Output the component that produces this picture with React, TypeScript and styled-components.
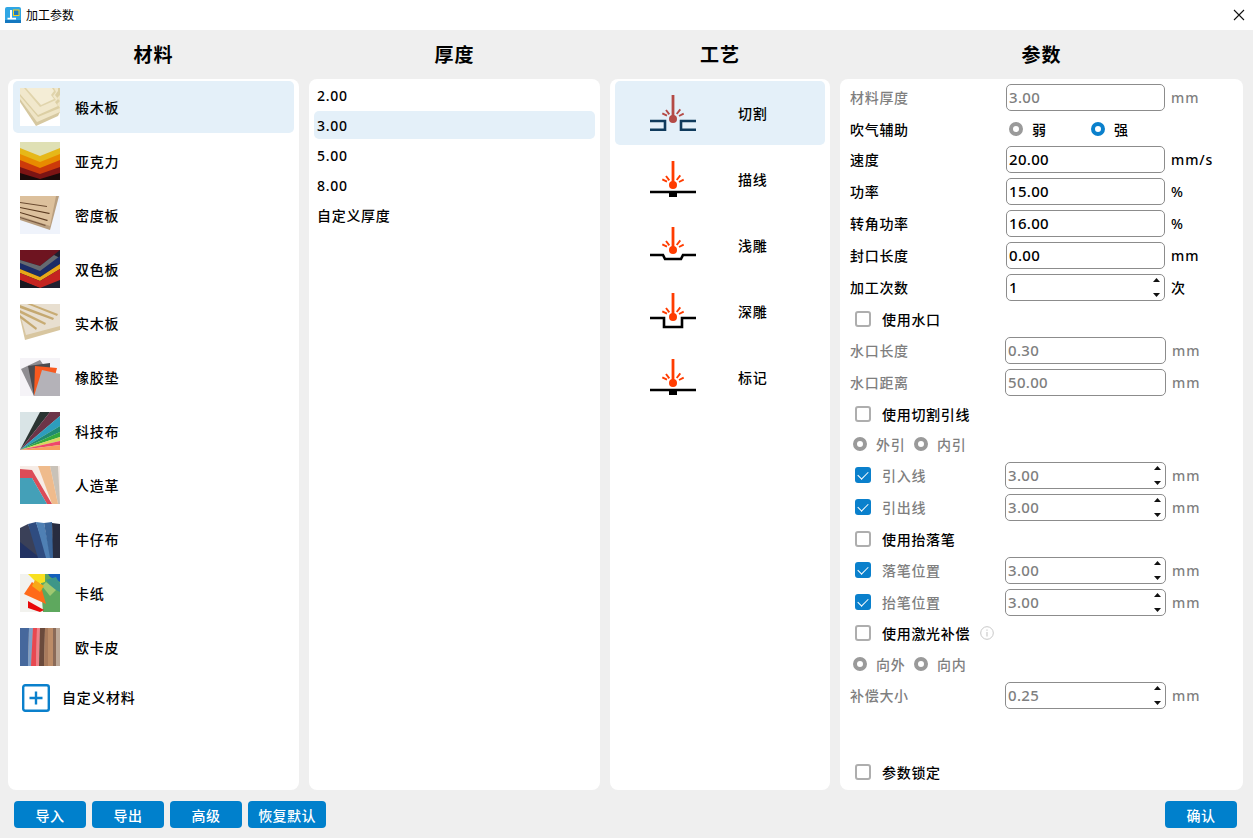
import React from "react";
import styled, { createGlobalStyle } from "styled-components";

const FONT = `"Noto Sans", "Noto Sans CJK SC", sans-serif`;

const GlobalStyle = createGlobalStyle`
  html, body {
    margin: 0;
    padding: 0;
    background: #efefef;
    font-family: ${FONT};
    overflow: hidden;
  }
  * { box-sizing: border-box; }
`;

type Shape = [string, string];

const thumbs: Record<string, { bg: string; shapes: Shape[] }> = {
  basswood: {
    bg: "#ffffff",
    shapes: [
      ["0,14 16,38 38,28 40,24 40,0 0,0", "#d6c8a0"],
      ["0,11 17,34 40,24 40,0 0,0", "#efe5c6"],
      ["0,8 18,29 40,20 37,16 40,13 37,10 40,7 40,0 0,0", "#dccfa4"],
      ["0,6 18,27 38,18 35,14 38,11 35,7 38,3 38,0 0,0", "#f1e8cc"],
      ["4,0 20,19 36,12 33,8 36,4 34,0", "#e0d4ac"],
      ["6,0 21,17 34,11 31,7 34,3 32,0", "#f4edd6"],
    ],
  },
  acrylic: {
    bg: "#d8d8c0",
    shapes: [
      ["0,0 40,0 40,6 20,14 0,6", "#dfe0b4"],
      ["0,6 20,14 40,6 40,14 20,22 0,14", "#e6b818"],
      ["0,12 20,20 40,12 40,20 20,28 0,20", "#e88a00"],
      ["0,18 20,26 40,18 40,26 20,33 0,26", "#cc3a0a"],
      ["0,25 20,32 40,25 40,32 20,38 0,32", "#7c1414"],
      ["0,31 20,37 40,31 40,38 0,38", "#1a0a0a"],
    ],
  },
  mdf: {
    bg: "#eff3fb",
    shapes: [
      ["0,0 39,0 30,34 0,24", "#b99f80"],
      ["0,0 36,0 30,30 0,20", "#dcc09c"],
      ["0,6 27,10 27,11 0,7", "#6a4a30"],
      ["0,11 30,17 29,18 0,12", "#5a3a20"],
      ["0,16 28,24 27,25 0,17", "#5a3a20"],
      ["0,21 26,29 25,30 0,22", "#7a5a40"],
    ],
  },
  twoColor: {
    bg: "#202030",
    shapes: [
      ["0,0 40,0 20,16 0,10", "#6e1420"],
      ["0,10 20,16 34,5 40,8 20,22 0,14", "#666a70"],
      ["0,13 20,21 40,6 40,14 20,27 0,19", "#1c2c66"],
      ["0,19 20,27 40,14 40,19 20,31 0,23", "#e8a818"],
      ["0,23 20,31 40,19 40,30 20,38 0,30", "#c42420"],
      ["0,30 20,38 0,38", "#181820"],
    ],
  },
  solidWood: {
    bg: "#ffffff",
    shapes: [
      ["0,14 5,36 40,26 40,0 0,0", "#d8c6a0"],
      ["0,10 6,31 40,22 40,0 0,0", "#e8dfd0"],
      ["0,1 34,14 33,16 0,4", "#c4a870"],
      ["0,6 26,19 25,21 0,9", "#c8ac74"],
      ["0,11 17,24 16,26 0,14", "#c4a870"],
      ["12,0 38,10 37,12 7,0", "#c8ac74"],
    ],
  },
  rubber: {
    bg: "#f5f3f7",
    shapes: [
      ["1,11 20,2 30,16 14,38", "#8f8d92"],
      ["8,8 30,5 30,20 14,38", "#4d4b4e"],
      ["15,8 37,10 30,38 14,38", "#f8591f"],
      ["22,12 40,16 40,38 14,38", "#b4b2b8"],
    ],
  },
  fabric: {
    bg: "#d9e4e6",
    shapes: [
      ["0,38 20,0 30,0", "#2a3432"],
      ["0,38 30,0 40,0 40,4", "#6c3448"],
      ["0,38 40,4 40,14", "#2d9dbd"],
      ["0,38 40,14 40,20", "#1f8a70"],
      ["0,38 40,20 40,25", "#34a83c"],
      ["0,38 40,25 40,29", "#d8d85c"],
      ["0,38 40,29 40,33", "#f0486a"],
      ["0,38 40,33 40,38", "#f8a060"],
    ],
  },
  leather: {
    bg: "#f6ece6",
    shapes: [
      ["30,0 38,0 40,38 38,38", "#c9c2b8"],
      ["18,0 30,0 38,38 32,38", "#efbb8c"],
      ["0,3 12,4 32,38 27,38 12,12 0,12", "#dc4c58"],
      ["0,12 12,12 27,38 0,38", "#44a0b8"],
    ],
  },
  denim: {
    bg: "#ffffff",
    shapes: [
      ["0,8 8,4 22,38 0,38", "#3a4058"],
      ["0,22 20,38 0,38", "#223262"],
      ["8,4 16,2 28,38 18,38", "#2f4c80"],
      ["16,2 24,3 31,38 26,38", "#4f80b4"],
      ["24,3 32,2 34,38 30,38", "#3a6498"],
      ["32,3 40,4 40,38 33,38", "#282c40"],
    ],
  },
  card: {
    bg: "#f2f2ee",
    shapes: [
      ["20,0 40,0 40,38 23,38", "#5ea85e"],
      ["28,0 40,0 40,8 30,3", "#1460bc"],
      ["26,6 36,3 40,10 40,18 32,14", "#3e9688"],
      ["22,12 26,8 36,16 30,22", "#a0c870"],
      ["8,0 25,0 25,8 18,10", "#f8e020"],
      ["12,8 22,16 26,30 4,20", "#ff6a18"],
      ["15,6 24,12 20,18 12,12", "#f8a818"],
      ["8,27 24,36 20,38 8,34", "#e80808"],
    ],
  },
  okapi: {
    bg: "#bca898",
    shapes: [
      ["0,0 9,0 8,38 0,38", "#46689c"],
      ["9,0 13,0 11,38 8,38", "#7ea0c8"],
      ["13,0 17,0 16,38 11,38", "#e84850"],
      ["17,0 20,0 19,38 16,38", "#f08088"],
      ["20,0 25,0 24,38 19,38", "#6a4a3c"],
      ["25,0 28,0 28,38 24,38", "#a87a5c"],
      ["28,0 33,0 33,38 28,38", "#bc8c68"],
      ["33,0 36,0 36,38 33,38", "#8a6a58"],
    ],
  },
};

const materials = [
  { name: "椴木板", thumb: "basswood" },
  { name: "亚克力", thumb: "acrylic" },
  { name: "密度板", thumb: "mdf" },
  { name: "双色板", thumb: "twoColor" },
  { name: "实木板", thumb: "solidWood" },
  { name: "橡胶垫", thumb: "rubber" },
  { name: "科技布", thumb: "fabric" },
  { name: "人造革", thumb: "leather" },
  { name: "牛仔布", thumb: "denim" },
  { name: "卡纸", thumb: "card" },
  { name: "欧卡皮", thumb: "okapi" },
];

const thicknesses = ["2.00", "3.00", "5.00", "8.00", "自定义厚度"];

type BaseKind = "cut" | "line" | "shallow" | "deep" | "mark";

const processes: { name: string; base: BaseKind }[] = [
  { name: "切割", base: "cut" },
  { name: "描线", base: "line" },
  { name: "浅雕", base: "shallow" },
  { name: "深雕", base: "deep" },
  { name: "标记", base: "mark" },
];

const Thumb = ({ kind }: { kind: string }) => {
  const t = thumbs[kind];
  return (
    <ThumbSvg viewBox="0 0 40 38">
      <rect width="40" height="38" fill={t.bg} />
      {t.shapes.map(([points, fill], i) => (
        <polygon key={i} points={points} fill={fill} />
      ))}
    </ThumbSvg>
  );
};

const LaserIcon = ({ base }: { base: BaseKind }) => {
  const selected = base === "cut";
  const laser = selected ? "#b44a46" : "#ff3c00";
  const ground = selected ? "#0f3a5c" : "#000000";
  const dotY = base === "shallow" ? 23 : 24;
  return (
    <LaserSvg viewBox="0 0 46 36">
      <g stroke={laser} fill="none">
        <path d="M23 0V22" strokeWidth="2.8" />
        <path d={`M16 ${dotY - 9}L19.3 ${dotY - 4.7}M30.3 ${dotY - 9.7}L26.7 ${dotY - 5}M12.3 ${dotY - 5.7}L17 ${dotY - 3.3}M33.7 ${dotY - 5.3}L29 ${dotY - 3}`} strokeWidth="1.9" />
      </g>
      <circle cx="23" cy={dotY} r="4" fill={laser} />
      <g stroke={ground} strokeWidth="2.6" fill="none">
        {base === "cut" && <path d="M0 26H15V34.7H0M46 26H31V34.7H46" />}
        {(base === "line" || base === "mark") && <path d="M0 31H46" />}
        {base === "shallow" && <path d="M0 28H13L15 32H31L33 28H46" />}
        {base === "deep" && <path d="M0 25H14V34H32V25H46" />}
      </g>
      {(base === "line" || base === "mark") && <rect x="19" y="31" width="8" height="5" fill={ground} />}
    </LaserSvg>
  );
};

const Spin = () => (
  <SpinBox>
    <svg width="7" height="4" viewBox="0 0 7 4"><path d="M3.5 0L7 4H0Z" fill="#111" /></svg>
    <svg width="7" height="4" viewBox="0 0 7 4"><path d="M0 0H7L3.5 4Z" fill="#111" /></svg>
  </SpinBox>
);

type FieldProps = {
  label: string;
  value: string;
  unit: string;
  off?: boolean;
  spin?: boolean;
  wide?: boolean;
  gap?: number;
  checked?: boolean;
};

const Field = ({ label, value, unit, off, spin, wide, gap, checked }: FieldProps) => (
  <Row $gap={gap}>
    {checked ? (
      <CheckLabel>
        <CheckBox $on />
        <SubLabel>{label}</SubLabel>
      </CheckLabel>
    ) : (
      <Label $off={off} $wide={wide}>{label}</Label>
    )}
    <InputBox $off={off} $wide={wide}>
      <span>{value}</span>
      {spin && <Spin />}
    </InputBox>
    <Unit $off={off}>{unit}</Unit>
  </Row>
);

const CheckRow = ({ label, gap, children }: { label: string; gap?: number; children?: React.ReactNode }) => (
  <Row $gap={gap}>
    <CheckLabel>
      <CheckBox />
      <CheckText>{label}</CheckText>
      {children}
    </CheckLabel>
  </Row>
);

const RadioPair = ({ a, b, gap }: { a: string; b: string; gap?: number }) => (
  <Row $gap={gap}>
    <RadioLine>
      <Radio />
      <RadioText>{a}</RadioText>
      <Radio />
      <RadioText>{b}</RadioText>
    </RadioLine>
  </Row>
);

const App = () => {
  return (
    <Window>
      <GlobalStyle />
      <TitleBar>
        <LogoSvg viewBox="0 0 16 16">
          <rect width="16" height="16" rx="2" fill="#2fa6e4" />
          <rect y="13" width="16" height="3" fill="#1478c0" />
          <path d="M2.5 12.5H11V10.8H7V3H5V10.8H2.5Z" fill="#fff" />
          <rect x="8.5" y="3" width="5.5" height="5.5" fill="#1c7cc0" stroke="#f4d020" strokeWidth="1" />
        </LogoSvg>
        <WindowTitle>加工参数</WindowTitle>
        <CloseSvg viewBox="0 0 12 12">
          <path d="M1 1L11 11M11 1L1 11" stroke="#111" strokeWidth="1.1" fill="none" />
        </CloseSvg>
      </TitleBar>

      <Columns>
        <Column>
          <Heading>材料</Heading>
          <Panel $pad="2px 5px">
            {materials.map((m, i) => (
              <MaterialRow key={m.name} $active={i === 0}>
                <Thumb kind={m.thumb} />
                <ItemText>{m.name}</ItemText>
              </MaterialRow>
            ))}
            <CustomRow>
              <PlusSvg viewBox="0 0 28 28">
                <rect x="1.2" y="1.2" width="25.6" height="25.6" rx="2" fill="none" stroke="#0a80cc" strokeWidth="2.4" />
                <path d="M14 7.5V20.5M7.5 14H20.5" stroke="#0a80cc" strokeWidth="2.4" />
              </PlusSvg>
              <CustomText>自定义材料</CustomText>
            </CustomRow>
          </Panel>
        </Column>

        <Column>
          <Heading>厚度</Heading>
          <Panel $pad="2px 5px">
            {thicknesses.map((t, i) => (
              <ThicknessRow key={t} $active={i === 1}>{t}</ThicknessRow>
            ))}
          </Panel>
        </Column>

        <Column>
          <Heading>工艺</Heading>
          <Panel $pad="2px 5px">
            {processes.map((p, i) => (
              <ProcessRow key={p.name} $active={i === 0}>
                <LaserIcon base={p.base} />
                <ItemText>{p.name}</ItemText>
              </ProcessRow>
            ))}
          </Panel>
        </Column>

        <Column>
          <Heading>参数</Heading>
          <ParamPanel>
            <Field label="材料厚度" value="3.00" unit="mm" off />
            <Row>
              <Label>吹气辅助</Label>
              <AirGroup>
                <Radio />
                <AirText>弱</AirText>
                <Radio $on />
                <AirText>强</AirText>
              </AirGroup>
            </Row>
            <Field label="速度" value="20.00" unit="mm/s" gap={2} />
            <Field label="功率" value="15.00" unit="%" />
            <Field label="转角功率" value="16.00" unit="%" />
            <Field label="封口长度" value="0.00" unit="mm" />
            <Field label="加工次数" value="1" unit="次" spin />
            <CheckRow label="使用水口" />
            <Field label="水口长度" value="0.30" unit="mm" off wide gap={3} />
            <Field label="水口距离" value="50.00" unit="mm" off wide />
            <CheckRow label="使用切割引线" />
            <RadioPair a="外引" b="内引" gap={2} />
            <Field label="引入线" value="3.00" unit="mm" off wide spin checked gap={3} />
            <Field label="引出线" value="3.00" unit="mm" off wide spin checked />
            <CheckRow label="使用抬落笔" />
            <Field label="落笔位置" value="3.00" unit="mm" off wide spin checked gap={3} />
            <Field label="抬笔位置" value="3.00" unit="mm" off wide spin checked />
            <CheckRow label="使用激光补偿" gap={3}>
              <InfoSvg viewBox="0 0 14 14">
                <circle cx="7" cy="7" r="6.3" fill="none" stroke="#c8c8c8" />
                <path d="M7 6V10.5M7 3.5V4.8" stroke="#c8c8c8" strokeWidth="1.1" />
              </InfoSvg>
            </CheckRow>
            <RadioPair a="向外" b="向内" gap={3} />
            <Field label="补偿大小" value="0.25" unit="mm" off wide spin gap={3} />
            <LockRow>
              <CheckLabel>
                <CheckBox />
                <CheckText>参数锁定</CheckText>
              </CheckLabel>
            </LockRow>
          </ParamPanel>
        </Column>
      </Columns>

      <Footer>
        <FootButton>导入</FootButton>
        <FootButton>导出</FootButton>
        <FootButton>高级</FootButton>
        <FootButton $wide>恢复默认</FootButton>
        <FooterSpacer />
        <FootButton>确认</FootButton>
      </Footer>
    </Window>
  );
};

export default App;

const Window = styled.div`
  width: 1253px;
  height: 838px;
  display: flex;
  flex-direction: column;
  background: #efefef;
  color: #000;
  font-size: 14px;
`;

const TitleBar = styled.div`
  height: 30px;
  background: #fff;
  display: flex;
  align-items: center;
  padding: 0 8px 0 5px;
`;

const LogoSvg = styled.svg`
  width: 16px;
  height: 16px;
  margin-right: 5px;
`;

const WindowTitle = styled.div`
  font-size: 12px;
  flex: 1;
`;

const CloseSvg = styled.svg`
  width: 12px;
  height: 12px;
`;

const Columns = styled.div`
  height: 760px;
  display: grid;
  grid-template-columns: 291px 291px 220px 403px;
  column-gap: 10px;
  padding: 0 10px 0 8px;
`;

const Column = styled.div`
  display: flex;
  flex-direction: column;
  min-height: 0;
`;

const Heading = styled.div`
  height: 49px;
  padding-bottom: 2px;
  display: flex;
  align-items: center;
  justify-content: center;
  font-size: 19px;
  font-weight: 700;
  letter-spacing: 1px;
`;

const Panel = styled.div<{ $pad: string }>`
  height: 711px;
  background: #fff;
  border-radius: 8px;
  padding: ${({ $pad }) => $pad};
  display: flex;
  flex-direction: column;
`;

const ParamPanel = styled(Panel).attrs({ $pad: "0 10px 4px 10px" })``;

const ItemText = styled.span`
  font-size: 14px;
  font-weight: 500;
  letter-spacing: 0.7px;
`;

const CustomText = styled(ItemText)`
  padding-bottom: 3px;
`;

const MaterialRow = styled.div<{ $active?: boolean }>`
  height: 52px;
  margin-bottom: 2px;
  flex: none;
  display: flex;
  align-items: center;
  padding-left: 7px;
  gap: 15px;
  border-radius: 5px;
  background: ${({ $active }) => ($active ? "#e4f0f9" : "transparent")};
`;

const ThumbSvg = styled.svg`
  width: 40px;
  height: 38px;
  flex: none;
`;

const CustomRow = styled.div`
  height: 46px;
  flex: none;
  display: flex;
  align-items: center;
  padding-left: 9px;
  gap: 12px;
`;

const PlusSvg = styled.svg`
  width: 28px;
  height: 28px;
`;

const ThicknessRow = styled.div<{ $active?: boolean }>`
  height: 28px;
  margin-bottom: 2px;
  flex: none;
  display: flex;
  align-items: center;
  padding-left: 3px;
  border-radius: 5px;
  font-size: 14px;
  font-weight: 500;
  letter-spacing: 0.7px;
  background: ${({ $active }) => ($active ? "#e4f0f9" : "transparent")};
`;

const ProcessRow = styled.div<{ $active?: boolean }>`
  height: 64px;
  margin-bottom: 2px;
  flex: none;
  display: flex;
  align-items: center;
  padding-left: 35px;
  gap: 42px;
  border-radius: 5px;
  background: ${({ $active }) => ($active ? "#e4f0f9" : "transparent")};
`;

const LaserSvg = styled.svg`
  width: 46px;
  height: 36px;
  flex: none;
  overflow: visible;
`;

const Row = styled.div<{ $gap?: number }>`
  height: 28px;
  flex: none;
  margin-top: ${({ $gap }) => $gap ?? 4}px;
  display: flex;
  align-items: center;
`;

const Label = styled.div<{ $off?: boolean; $wide?: boolean }>`
  width: ${({ $wide }) => ($wide ? 155 : 156)}px;
  flex: none;
  font-weight: 500;
  letter-spacing: 0.7px;
  color: ${({ $off }) => ($off ? "#7f7f7f" : "#000")};
`;

const InputBox = styled.div<{ $off?: boolean; $wide?: boolean }>`
  width: ${({ $wide }) => ($wide ? 161 : 159)}px;
  height: 27px;
  flex: none;
  border: 1px solid #8c8c8c;
  border-radius: 5px;
  background: #fff;
  display: flex;
  align-items: center;
  justify-content: space-between;
  padding: 0 4px 0 2px;
  font-size: 15px;
  font-weight: 500;
  letter-spacing: 0.3px;
  color: ${({ $off }) => ($off ? "#7f7f7f" : "#000")};
`;

const SpinBox = styled.div`
  height: 19px;
  display: flex;
  flex-direction: column;
  justify-content: space-between;
  align-items: center;
`;

const Unit = styled.div<{ $off?: boolean }>`
  margin-left: 6px;
  font-weight: 500;
  letter-spacing: 0.9px;
  color: ${({ $off }) => ($off ? "#7f7f7f" : "#000")};
`;

const CheckLabel = styled.div`
  width: 155px;
  flex: none;
  display: flex;
  align-items: center;
  padding-left: 5px;
`;

const CheckBox = styled.div<{ $on?: boolean }>`
  width: 16px;
  height: 16px;
  flex: none;
  margin-right: 11px;
  border-radius: 3px;
  border: ${({ $on }) => ($on ? "none" : "2px solid #aeaeae")};
  background: ${({ $on }) => ($on ? "#0a80cc" : "#fff")};
  display: flex;
  align-items: center;
  justify-content: center;

  &::after {
    content: "";
    display: ${({ $on }) => ($on ? "block" : "none")};
    width: 9px;
    height: 5px;
    margin-top: -2px;
    border-left: 1px solid #fff;
    border-bottom: 1px solid #fff;
    transform: rotate(-45deg);
  }
`;

const CheckText = styled.span`
  font-weight: 500;
  letter-spacing: 0.7px;
  white-space: nowrap;
`;

const SubLabel = styled(CheckText)`
  color: #7f7f7f;
`;

const InfoSvg = styled.svg`
  width: 14px;
  height: 14px;
  margin-left: 10px;
  flex: none;
`;

const RadioLine = styled.div`
  display: flex;
  align-items: center;
  padding-left: 3px;
`;

const Radio = styled.div<{ $on?: boolean }>`
  width: 14px;
  height: 14px;
  flex: none;
  border-radius: 50%;
  border: 4px solid ${({ $on }) => ($on ? "#0a80cc" : "#9a9a9a")};
  background: #fff;
`;

const RadioText = styled.span`
  margin: 0 9px;
  width: 29px;
  font-weight: 500;
  letter-spacing: 0.7px;
  color: #7f7f7f;
  white-space: nowrap;
`;

const AirGroup = styled.div`
  display: flex;
  align-items: center;
  padding-left: 3px;
`;

const AirText = styled.span`
  width: 59px;
  margin-left: 9px;
  font-weight: 500;
`;

const LockRow = styled.div`
  margin-top: auto;
  height: 28px;
  flex: none;
  display: flex;
  align-items: center;
`;

const Footer = styled.div`
  height: 48px;
  display: flex;
  align-items: flex-start;
  gap: 6px;
  padding: 11px 16px 0 14px;
`;

const FooterSpacer = styled.div`
  flex: 1;
`;

const FootButton = styled.div<{ $wide?: boolean }>`
  width: ${({ $wide }) => ($wide ? 78 : 72)}px;
  height: 27px;
  border-radius: 4px;
  background: #0080cc;
  color: #fff;
  display: flex;
  align-items: center;
  justify-content: center;
  font-size: 14px;
  font-weight: 500;
  letter-spacing: 0.4px;
`;
